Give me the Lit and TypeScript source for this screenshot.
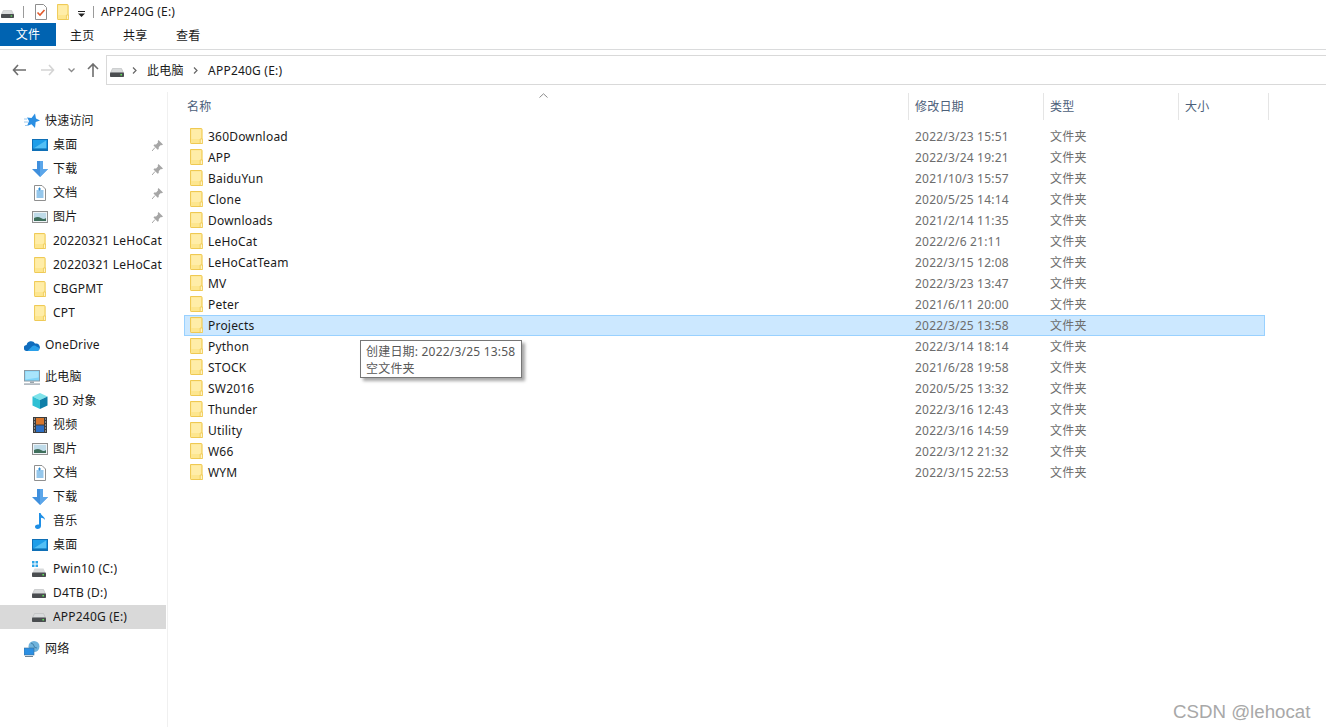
import { LitElement, html, css, svg } from "lit";
import { customElement } from "lit/decorators.js";

const folder = (w = 14, h = 16) => html`<svg class="o2" width=${w} height=${h} viewBox="0 0 14 16" preserveAspectRatio="none"><path d="M.5.5h11.500a1 1 0 0 1 1 1v14H1.200a.7.7 0 0 1-.7-.7z" fill="#fde68f" stroke="#eec74d"/><path d="M1.500 1.500h10.300v9.500H1.500z" fill="#ffeda8"/><path d="M11 11h2.500v4.500H11z" fill="#fff3c4" stroke="#eec74d" stroke-width=".8"/></svg>`;
const hdd = (w = 14, h = 9) => html`<svg width=${w} height=${h} viewBox="0 0 14 9" preserveAspectRatio="none"><path d="M2.500.5h9L13.600 5H.4z" fill="#d9dbdc" stroke="#b9bbbc" stroke-width=".6"/><rect x="0" y="4.600" width="14" height="4.400" rx=".8" fill="#4a4d50"/><rect x="10.400" y="6" width="1.600" height="1.500" fill="#5fe05a"/></svg>`;
const monitor = () => html`<svg width="16" height="12" viewBox="0 0 16 12"><rect x=".5" y=".5" width="15" height="11" fill="#1e9ee9" stroke="#0f6fb6"/><path d="M1.500 9.500 14 1.600v8z" fill="#54c0f5"/><rect x="1" y="9.600" width="14" height="1.200" fill="#0b66a8"/></svg>`;
const down = () => html`<svg width="16" height="16" viewBox="0 0 16 16"><path d="M5 0h6v8h5l-8 8-8-8h5z" fill="#3f8fdd"/><path d="M8 0h3v8h5l-8 8z" fill="#5ba6ea"/></svg>`;
const doc = () => html`<svg class="o2" width="12" height="16" viewBox="0 0 12 16"><path d="M.5.5h7.500l3.500 3.500v11.500H.5z" fill="#fff" stroke="#8f8f8f"/><path d="M2.500 6h7M2.500 8h7M2.500 10h7M2.500 12h7M4 4h3M5.500 2.500v3" stroke="#2d8fd8"/></svg>`;
const pic = () => html`<svg width="16" height="12" viewBox="0 0 16 12"><rect x=".5" y=".5" width="15" height="11" fill="#eef3f6" stroke="#8f8f8f"/><rect x="2" y="2" width="12" height="8" fill="#bfdbe9"/><path d="M2 10V7q4-2 7 0t5 0v3z" fill="#3f6f5c"/></svg>`;
const star = () => html`<svg width="16" height="16" viewBox="0 0 16 16"><path d="M11 0.500 12 5.500 16 7.500 11.700 9 11 15 7.500 11.200 3 13 5 8 3 4.500 7.500 5z" fill="#2b8fe3"/><path d="M0 9h4M0 6h3M1 12.500h3" stroke="#9cc8ee"/></svg>`;
const cloud = () => html`<svg width="16" height="11" viewBox="0 0 16 11"><path d="M3 11a3 3 0 0 1-.4-6A4.500 4.500 0 0 1 11 3.600 3.600 3.600 0 0 1 13 11z" fill="#0f6cbd"/><path d="M3.500 11 8 6.500a3 3 0 0 1 5 .5 2 2 0 0 1 .5 4z" fill="#2aa0ea"/></svg>`;
const pc = () => html`<svg width="16" height="15" viewBox="0 0 16 15"><rect x=".5" y=".5" width="15" height="10.500" fill="#7fd4f8" stroke="#8a9aa5"/><path d="M1.500 1.500h13v6L1.500 9.500z" fill="#a9e4fb"/><path d="M6 11.500h4v1.500H6z" fill="#9aa5ad"/><rect x="0" y="13.400" width="16" height="1.400" fill="#a0aab2"/></svg>`;
const cube = () => html`<svg width="16" height="16" viewBox="0 0 16 16"><path d="M8 0l7.500 3.500L8 7 .5 3.500z" fill="#7fe3ea"/><path d="M.5 3.500 8 7v9L.5 12.500z" fill="#2fc0d4"/><path d="M15.500 3.500 8 7v9l7.500-3.500z" fill="#0f7fa8"/></svg>`;
const film = () => html`<svg class="o1" width="14" height="16" viewBox="0 0 14 16"><rect width="14" height="16" fill="#3c3c3c"/><rect x="3" y="1" width="8" height="6.500" fill="#d8762c"/><rect x="3" y="8.500" width="8" height="6.500" fill="#2d6fc4"/><path d="M1 2h1M1 5h1M1 8h1M1 11h1M1 14h1M12 2h1M12 5h1M12 8h1M12 11h1M12 14h1" stroke="#ddd"/></svg>`;
const music = () => html`<svg class="o2" width="12" height="16" viewBox="0 0 12 16"><path d="M5 0h1.600c.4 3 4.400 3.400 4.400 7-1-1.600-2.600-2.200-4-2.300V13c0 1.800-1.600 3-3.400 3S1 15 1 13.600 2.600 11 5 11.500z" fill="#1e8fe6"/></svg>`;
const win = () => html`<svg width="14" height="16" viewBox="0 0 14 16"><g fill="#2ea5e8"><rect x="0" y="0" width="2.500" height="2.500"/><rect x="3.500" y="0" width="2.500" height="2.500"/><rect x="0" y="3.500" width="2.500" height="2.500"/><rect x="3.500" y="3.500" width="2.500" height="2.500"/></g><g transform="translate(0 7)">${svg`<path d="M2.500.5h9L13.600 5H.4z" fill="#d9dbdc"/><rect y="4.600" width="14" height="4.400" rx=".8" fill="#4a4d50"/><rect x="10.400" y="6" width="1.600" height="1.500" fill="#5fe05a"/>`}</g></svg>`;
const net = () => html`<svg width="16" height="16" viewBox="0 0 16 16"><circle cx="10" cy="5.500" r="5.500" fill="#6fb3dc"/><path d="M7 2q3 1 3 3t3 2" stroke="#3f7fa8" fill="none"/><rect x="0" y="7" width="10" height="7" fill="#2b8fe3" stroke="#3d6f96" stroke-width=".6"/><path d="M1 15.500h8" stroke="#6d8393"/></svg>`;
const pin = () => html`<svg width="11" height="11" viewBox="0 0 11 11"><path d="M6.500 0 11 4.500 9.800 5.300 8.900 5 6.800 7.100 6.700 9 5.700 9.800 1.500 5.500 2.200 4.500 4.100 4.400 6.100 2.300 5.700 1.300z" fill="#a6a6a6"/><path d="M3 7.500 0 11" stroke="#a6a6a6"/></svg>`;
const crumb = () => html`<svg width="5" height="7" viewBox="0 0 5 7"><path d="M1 .5 4 3.500 1 6.500" fill="none" stroke="#666" stroke-width="1.200"/></svg>`;

type Nav = { k?: "top" | "sub"; t: string; i: unknown; p?: boolean; sel?: boolean; gap?: boolean };
const nav: Nav[] = [
  { k: "top", t: "快速访问", i: star() },
  { k: "sub", t: "桌面", i: monitor(), p: true },
  { k: "sub", t: "下载", i: down(), p: true },
  { k: "sub", t: "文档", i: doc(), p: true },
  { k: "sub", t: "图片", i: pic(), p: true },
  { k: "sub", t: "20220321 LeHoCat", i: folder(12, 16) },
  { k: "sub", t: "20220321 LeHoCat", i: folder(12, 16) },
  { k: "sub", t: "CBGPMT", i: folder(12, 16) },
  { k: "sub", t: "CPT", i: folder(12, 16) },
  { k: "top", t: "OneDrive", i: cloud(), gap: true },
  { k: "top", t: "此电脑", i: pc(), gap: true },
  { k: "sub", t: "3D 对象", i: cube() },
  { k: "sub", t: "视频", i: film() },
  { k: "sub", t: "图片", i: pic() },
  { k: "sub", t: "文档", i: doc() },
  { k: "sub", t: "下载", i: down() },
  { k: "sub", t: "音乐", i: music() },
  { k: "sub", t: "桌面", i: monitor() },
  { k: "sub", t: "Pwin10 (C:)", i: win() },
  { k: "sub", t: "D4TB (D:)", i: hdd(14, 9) },
  { k: "sub", t: "APP240G (E:)", i: hdd(14, 9), sel: true },
  { k: "top", t: "网络", i: net(), gap: true },
];

const files: [string, string][] = [
  ["360Download", "2022/3/23 15:51"], ["APP", "2022/3/24 19:21"], ["BaiduYun", "2021/10/3 15:57"],
  ["Clone", "2020/5/25 14:14"], ["Downloads", "2021/2/14 11:35"], ["LeHoCat", "2022/2/6 21:11"],
  ["LeHoCatTeam", "2022/3/15 12:08"], ["MV", "2022/3/23 13:47"], ["Peter", "2021/6/11 20:00"],
  ["Projects", "2022/3/25 13:58"], ["Python", "2022/3/14 18:14"], ["STOCK", "2021/6/28 19:58"],
  ["SW2016", "2020/5/25 13:32"], ["Thunder", "2022/3/16 12:43"], ["Utility", "2022/3/16 14:59"],
  ["W66", "2022/3/12 21:32"], ["WYM", "2022/3/15 22:53"],
];

@customElement("app-root")
export class AppRoot extends LitElement {
  static styles = css`
    :host { display: block; position: relative; width: 1326px; height: 728px; overflow: hidden; background: #fff; color: #1a1a1a;
      font: 12px/16px "Noto Sans", "Noto Sans CJK SC", sans-serif; letter-spacing: .2px; }
    .title { height: 23px; display: flex; align-items: center; padding-left: 1px; }
    .title .h { margin-top: 5px; display: flex; }
    .vs { width: 1px; height: 12px; background: #9a9a9a; }
    .title .vs.a { margin: 0 11px 0 9px; }
    .title .f { margin-left: 10px; display: flex; }
    .title .dd { margin: 4px 8px 0 9px; display: flex; }
    .title .name { margin-left: 7px; margin-top: 1px; }
    .tabs { height: 23px; display: flex; align-items: center; padding-top: 0; }
    .tab { width: 53px; margin-top: 2px; }
    .tab.file { width: 56px; height: 23px; margin-top: 0; line-height: 24px; background: #0063b1; color: #fff; text-align: center; margin-right: 14px; flex: none; }
    .ribbon-line { margin-top: 3px; height: 1px; background: #dadbdc; }
    .navbar { margin-top: 5px; height: 30px; display: flex; align-items: center; }
    .arrows { width: 106px; display: flex; align-items: center; flex: none; }
    .arrows svg { display: block; }
    .addr { flex: 1; margin-right: -4px; height: 30px; box-sizing: border-box; border: 1px solid #d9d9d9; display: flex; align-items: center; padding: 2px 0 0 3px; }
    .addr .hd { display: flex; margin: 2px 8px 0 0; }
    .addr .sep { margin: -2px 10px 0 0; display: flex; }
    .addr span { margin-right: 10px; }
    .addr .crumbtext { margin-right: 9.5px; }
    .body { display: flex; margin-top: 7px; height: 635px; }
    .side { width: 168px; flex: none; box-sizing: border-box; border-right: 1px solid #f0f0f0; padding-top: 17px; }
    .row { height: 24px; width: 166px; display: flex; align-items: center; position: relative; }
    .row.gap { margin-top: 8px; }
    .row.top .ic { margin-left: 24px; width: 21px; }
    .row.sub .ic { margin-left: 32px; width: 21px; }
    .ic { display: flex; align-items: center; flex: none; }
    .ic .o1 { margin-left: 1px; }
    .ic .o2 { margin-left: 2px; }
    .row.sel { background: #d9d9d9; }
    .lbl { white-space: nowrap; overflow: hidden; }
    .row.sub .lbl { max-width: 110px; }
    .pin { position: absolute; left: 152px; top: 7px; display: flex; }
    .main { flex: 1; position: relative; padding: 1px 0 0 16px; }
    .head { display: grid; grid-template-columns: 725px 135px 135px 90px; height: 27px; width: 1085px; color: #4c607a; }
    .hc { border-right: 1px solid #e5e5e5; padding: 6px 0 0 3px; height: 21px; }
    .hc + .hc { padding-left: 6px; }
    .sort { position: absolute; left: 371px; top: 1px; display: flex; }
    .list { margin-top: 6px; }
    .frow { display: grid; grid-template-columns: 725px 135px 135px; height: 21px; width: 1081px; align-items: center; box-sizing: border-box; }
    .frow.sel { background: #cce8ff; outline: 1px solid #99d1ff; outline-offset: -1px; }
    .fn { display: flex; align-items: center; padding-left: 6px; }
    .fn svg { margin-right: 5px; flex: none; margin-top: -1px; }
    .d { color: #6d6d6d; padding-left: 6px; }
    .tip { position: absolute; left: 360px; top: 340px; width: 162px; height: 38px; box-sizing: border-box; padding: 2px 5px; border: 1px solid #767676; background: #fff; color: #575757; box-shadow: 3px 3px 3px rgba(0,0,0,.35); white-space: nowrap; line-height: 17px; }
    .wm { position: absolute; left: 1173px; top: 701px; font: 18.7px/22px "Liberation Sans", sans-serif; letter-spacing: 0; color: #a8a8a8; white-space: nowrap; }
  `;

  render() {
    return html`
      <div class="title">
        <span class="h">${hdd(13, 8)}</span>
        <span class="vs a"></span>
        <svg width="12" height="16" viewBox="0 0 12 16"><path d="M.5.5h8l3 3v12H.5z" fill="#fff" stroke="#8e8e8e"/><path d="M2.500 8.500 5 11l4.500-5" fill="none" stroke="#e2592b" stroke-width="1.600"/></svg>
        <span class="f">${folder(12, 16)}</span>
        <span class="dd"><svg width="7" height="6" viewBox="0 0 7 6"><path d="M0 0h7v1H0zM0 2.500h7L3.500 6z" fill="#222"/></svg></span>
        <span class="vs"></span>
        <span class="name">APP240G (E:)</span>
      </div>
      <div class="tabs">
        <div class="tab file">文件</div>
        <div class="tab">主页</div><div class="tab">共享</div><div class="tab">查看</div>
      </div>
      <div class="ribbon-line"></div>
      <div class="navbar">
        <div class="arrows">
          <svg style="margin-left:12px" width="14" height="12" viewBox="0 0 14 12"><path d="M6 1 1.500 6 6 11M1.500 6H14" fill="none" stroke="#6e6e6e" stroke-width="1.600"/></svg>
          <svg style="margin-left:15px" width="14" height="12" viewBox="0 0 14 12"><path d="M8 1l4.500 5L8 11M12.500 6H0" fill="none" stroke="#d4d4d4" stroke-width="1.600"/></svg>
          <svg style="margin-left:13px" width="7" height="5" viewBox="0 0 7 5"><path d="M.5.5 3.500 3.500 6.500.5" fill="none" stroke="#8a8a8a" stroke-width="1.300"/></svg>
          <svg style="margin-left:12px" width="12" height="14" viewBox="0 0 12 14"><path d="M1 6l5-5 5 5M6 1v13" fill="none" stroke="#6e6e6e" stroke-width="1.600"/></svg>
        </div>
        <div class="addr">
          <span class="hd">${hdd(14, 9)}</span>
          <span class="sep">${crumb()}</span>
          <span class="crumbtext">此电脑</span>
          <span class="sep">${crumb()}</span>
          <span>APP240G (E:)</span>
        </div>
      </div>
      <div class="body">
        <div class="side">
          ${nav.map((n) => html`
            <div class="row ${n.k} ${n.gap ? "gap" : ""} ${n.sel ? "sel" : ""}">
              <span class="ic">${n.i}</span><span class="lbl">${n.t}</span>
              ${n.p ? html`<span class="pin">${pin()}</span>` : ""}
            </div>`)}
        </div>
        <div class="main">
          <span class="sort"><svg width="9" height="5" viewBox="0 0 9 5"><path d="M.5 4.500 4.500.8 8.500 4.500" fill="none" stroke="#8a8a8a"/></svg></span>
          <div class="head">
            <div class="hc">名称</div><div class="hc">修改日期</div><div class="hc">类型</div><div class="hc">大小</div>
          </div>
          <div class="list">
            ${files.map(([n, d]) => html`
              <div class="frow ${n === "Projects" ? "sel" : ""}">
                <div class="fn">${folder(13, 16)}<span>${n}</span></div>
                <div class="d">${d}</div><div class="d">文件夹</div>
              </div>`)}
          </div>
        </div>
      </div>
      <div class="tip">创建日期: 2022/3/25 13:58<br />空文件夹</div>
      <div class="wm">CSDN @lehocat</div>
    `;
  }
}
